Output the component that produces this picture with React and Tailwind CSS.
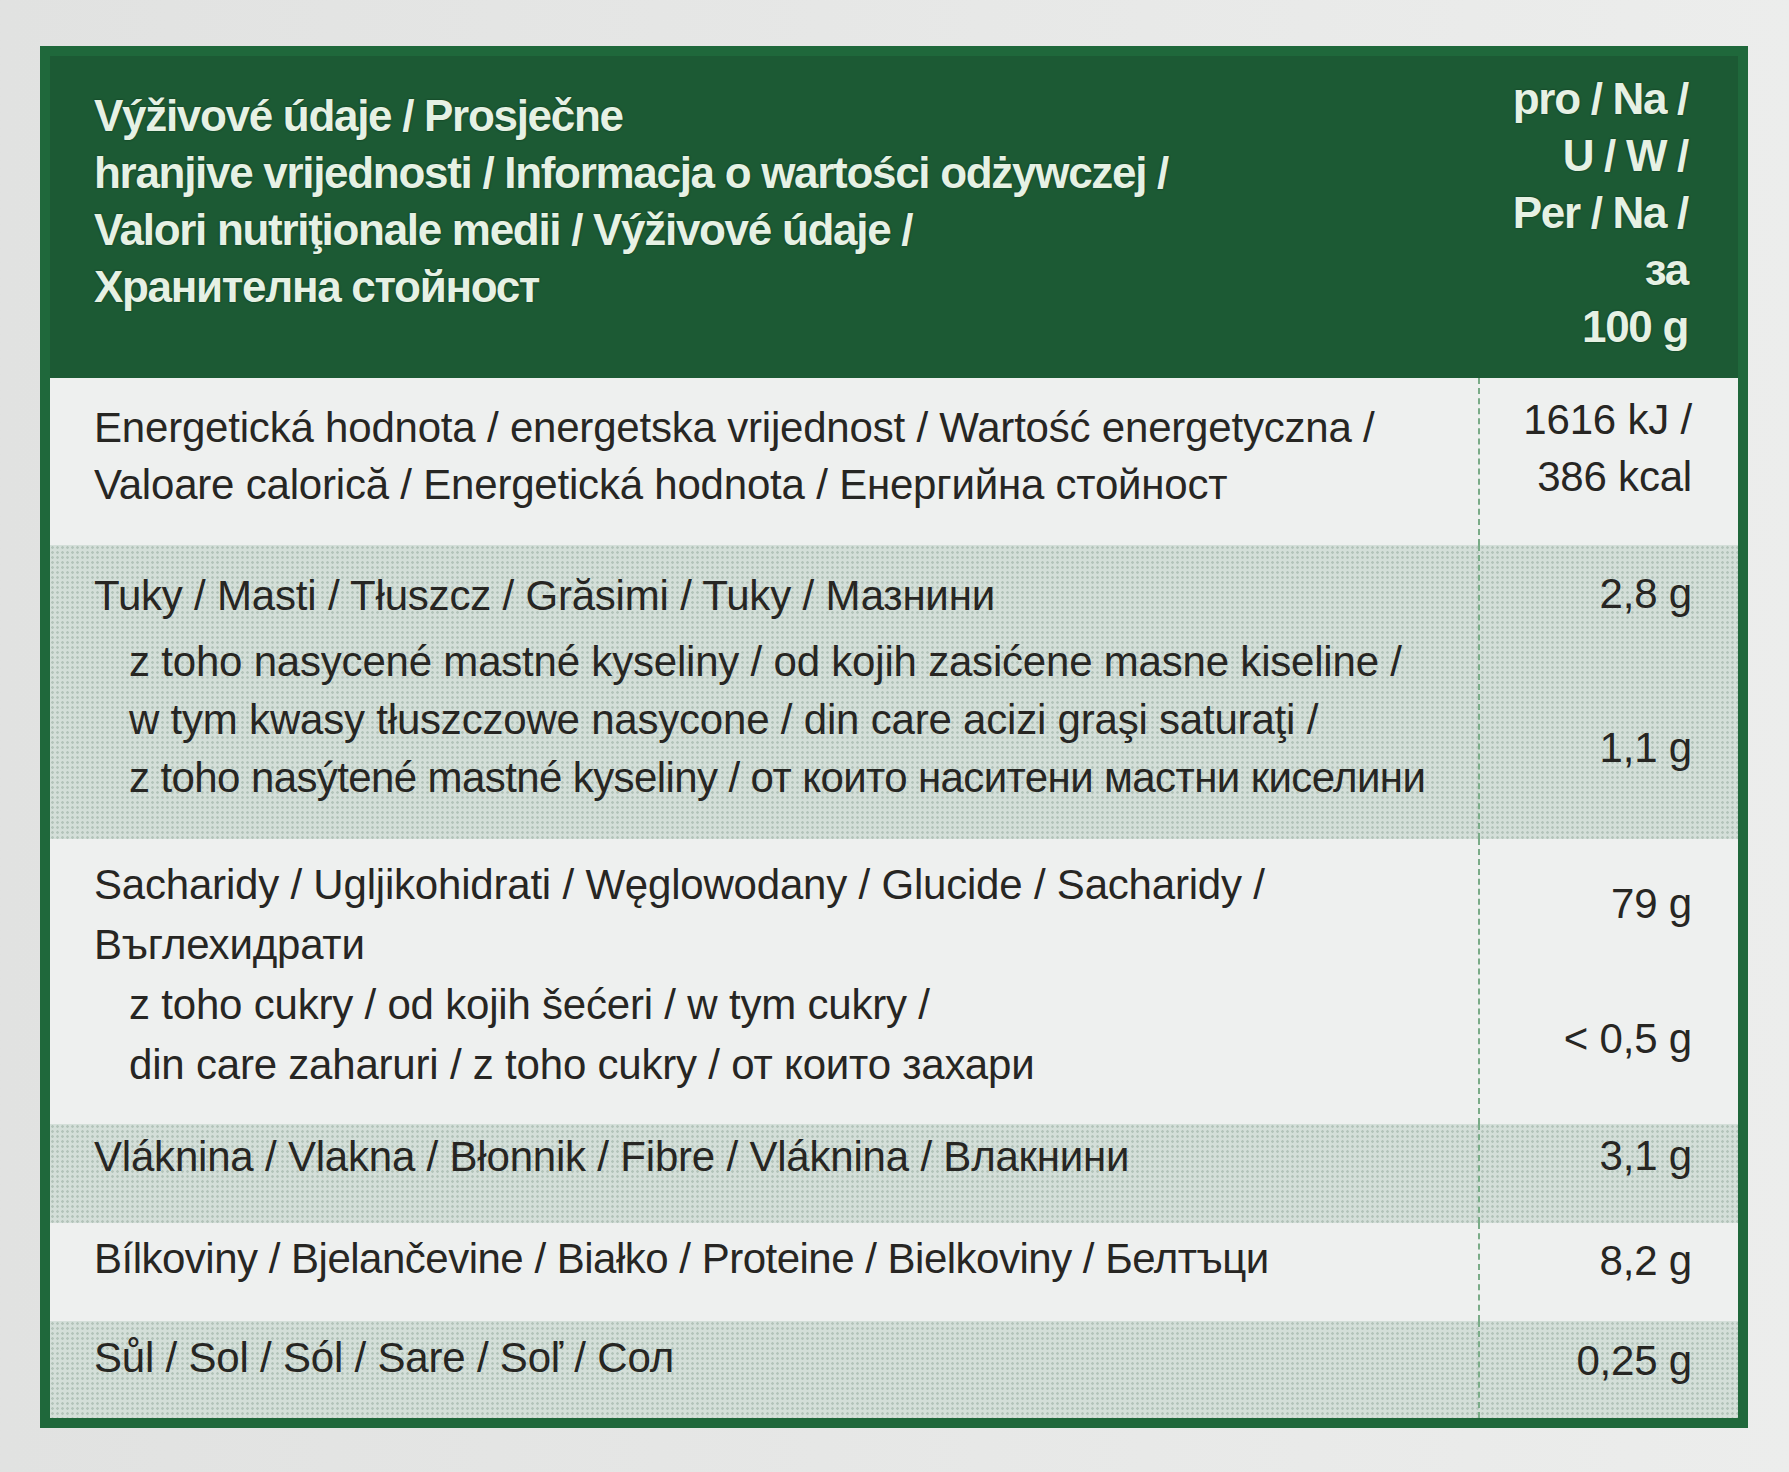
const tint = "bg-[#d4dfd9] bg-[radial-gradient(circle,rgba(110,140,122,0.32)_1px,transparent_1.6px)] bg-[length:5px_5px]";
const plain = "bg-[#eef0ef]";

const headerLeft = [
  'Výživové údaje / Prosječne',
  'hranjive vrijednosti / Informacja o wartości odżywczej /',
  'Valori nutriţionale medii / Výživové údaje /',
  'Хранителна стойност',
];
const headerRight = ['pro / Na /', 'U / W /', 'Per / Na /', 'за', '100 g'];

function Row({ bg, h, children, values }) {
  return (
    <div className={`grid grid-cols-[1fr_260px] ${bg} ${h}`}>
      <div className="pl-[44px]">{children}</div>
      <div className="border-l-2 border-dashed border-[#7aac88] pr-[46px] text-right">{values}</div>
    </div>
  );
}

export default function App() {
  return (
    <div className="min-h-screen bg-gradient-to-r from-[#e1e2e1] to-[#ecedec] pl-[40px] pt-[46px] font-['Liberation_Sans','Arial',sans-serif]">
      <div className="w-[1708px] border-[10px] border-[#1f683b] bg-[#eef0ef]">
        {/* header */}
        <div className="flex h-[322px] justify-between bg-[#1c5a34] text-[44px] font-bold leading-[57px] tracking-[-1.3px] text-[#e6f1e4] [text-shadow:0_0_2px_rgba(0,30,10,0.7)]">
          <div className="pl-[44px] pt-[31px]">
            {headerLeft.map((t) => <div key={t}>{t}</div>)}
          </div>
          <div className="pr-[50px] pt-[14px] text-right">
            {headerRight.map((t) => <div key={t}>{t}</div>)}
          </div>
        </div>

        <div className="text-[42px] leading-[58px] tracking-[-0.2px] text-[#272623]">
          <Row
            bg={plain}
            h="h-[167px]"
            values={<div className="pt-[13px] leading-[57px]"><div>1616 kJ /</div><div>386 kcal</div></div>}
          >
            <div className="pt-[21px] leading-[57px]">
              <div>Energetická hodnota / energetska vrijednost / Wartość energetyczna /</div>
              <div>Valoare calorică / Energetická hodnota / Енергийна стойност</div>
            </div>
          </Row>

          <Row
            bg={tint}
            h="h-[294px]"
            values={<div className="pt-[20px]"><div>2,8 g</div><div className="mt-[96px]">1,1 g</div></div>}
          >
            <div className="pt-[22px]">
              <div>Tuky / Masti / Tłuszcz / Grăsimi / Tuky / Мазнини</div>
              <div className="mt-[8px] pl-[35px]">
                <div>z toho nasycené mastné kyseliny / od kojih zasićene masne kiseline /</div>
                <div>w tym kwasy tłuszczowe nasycone / din care acizi graşi saturaţi /</div>
                <div className="tracking-[-0.6px]">z toho nasýtené mastné kyseliny / от които наситени мастни киселини</div>
              </div>
            </div>
          </Row>

          <Row
            bg={plain}
            h="h-[285px]"
            values={<div className="pt-[36px]"><div>79 g</div><div className="mt-[77px]">&lt; 0,5 g</div></div>}
          >
            <div className="pt-[16px] leading-[60px]">
              <div>Sacharidy / Ugljikohidrati / Węglowodany / Glucide / Sacharidy /</div>
              <div>Въглехидрати</div>
              <div className="pl-[35px]">
                <div>z toho cukry / od kojih šećeri / w tym cukry /</div>
                <div>din care zaharuri / z toho cukry / от които захари</div>
              </div>
            </div>
          </Row>

          <Row bg={tint} h="h-[99px]" values={<div className="pt-[3px]">3,1 g</div>}>
            <div className="pt-[4px]">Vláknina / Vlakna / Błonnik / Fibre / Vláknina / Влакнини</div>
          </Row>

          <Row bg={plain} h="h-[98px]" values={<div className="pt-[9px]">8,2 g</div>}>
            <div className="pt-[7px] tracking-[-0.5px]">Bílkoviny / Bjelančevine / Białko / Proteine / Bielkoviny / Белтъци</div>
          </Row>

          <Row bg={tint} h="h-[97px]" values={<div className="pt-[11px]">0,25 g</div>}>
            <div className="pt-[8px]">Sůl / Sol / Sól / Sare / Soľ / Сол</div>
          </Row>
        </div>
      </div>
    </div>
  );
}
